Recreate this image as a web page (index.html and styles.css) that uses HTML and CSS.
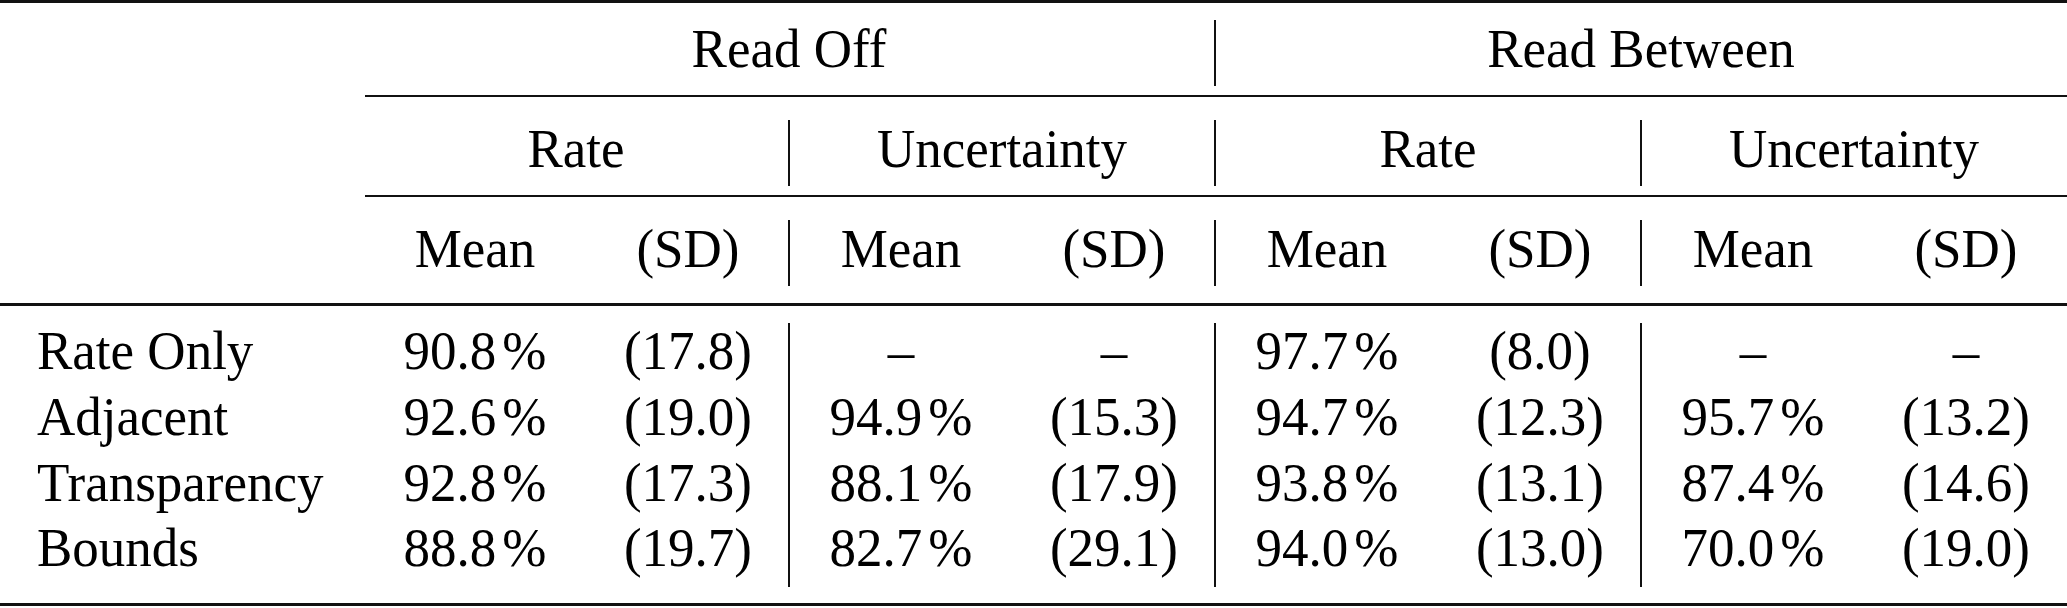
FILE: index.html
```html
<!DOCTYPE html>
<html lang="en">
<head>
<meta charset="utf-8">
<title>Read Off / Read Between results</title>
<link rel="stylesheet" href="styles.css">
</head>
<body>
<div class="tbl">
  <div class="rule thick"></div>

  <div class="hrow h1">
    <div class="c ro">Read Off</div>
    <div class="c rb">Read Between</div>
    <span class="vl g3"></span>
  </div>

  <div class="cmid"></div>

  <div class="hrow h2">
    <div class="c g1">Rate</div>
    <div class="c g2">Uncertainty</div>
    <div class="c g3">Rate</div>
    <div class="c g4">Uncertainty</div>
    <span class="vl g2"></span>
    <span class="vl g3"></span>
    <span class="vl g4"></span>
  </div>

  <div class="cmid"></div>

  <div class="hrow h3 cells">
    <div class="c lab"></div>
    <div class="c">Mean</div>
    <div class="c">(SD)</div>
    <div class="c">Mean</div>
    <div class="c">(SD)</div>
    <div class="c">Mean</div>
    <div class="c">(SD)</div>
    <div class="c">Mean</div>
    <div class="c">(SD)</div>
    <span class="vl g2"></span>
    <span class="vl g3"></span>
    <span class="vl g4"></span>
  </div>

  <div class="rule thick"></div>

  <div class="body">
    <div class="drow r1 cells">
      <div class="c lab">Rate Only</div>
      <div class="c">90.8<span class="pct">%</span></div>
      <div class="c">(17.8)</div>
      <div class="c">–</div>
      <div class="c">–</div>
      <div class="c">97.7<span class="pct">%</span></div>
      <div class="c">(8.0)</div>
      <div class="c">–</div>
      <div class="c">–</div>
    </div>
    <div class="drow r2 cells">
      <div class="c lab">Adjacent</div>
      <div class="c">92.6<span class="pct">%</span></div>
      <div class="c">(19.0)</div>
      <div class="c">94.9<span class="pct">%</span></div>
      <div class="c">(15.3)</div>
      <div class="c">94.7<span class="pct">%</span></div>
      <div class="c">(12.3)</div>
      <div class="c">95.7<span class="pct">%</span></div>
      <div class="c">(13.2)</div>
    </div>
    <div class="drow r3 cells">
      <div class="c lab">Transparency</div>
      <div class="c">92.8<span class="pct">%</span></div>
      <div class="c">(17.3)</div>
      <div class="c">88.1<span class="pct">%</span></div>
      <div class="c">(17.9)</div>
      <div class="c">93.8<span class="pct">%</span></div>
      <div class="c">(13.1)</div>
      <div class="c">87.4<span class="pct">%</span></div>
      <div class="c">(14.6)</div>
    </div>
    <div class="drow r4 cells">
      <div class="c lab">Bounds</div>
      <div class="c">88.8<span class="pct">%</span></div>
      <div class="c">(19.7)</div>
      <div class="c">82.7<span class="pct">%</span></div>
      <div class="c">(29.1)</div>
      <div class="c">94.0<span class="pct">%</span></div>
      <div class="c">(13.0)</div>
      <div class="c">70.0<span class="pct">%</span></div>
      <div class="c">(19.0)</div>
    </div>
    <span class="vl g2"></span>
    <span class="vl g3"></span>
    <span class="vl g4"></span>
  </div>

  <div class="rule thick"></div>
</div>
</body>
</html>
```
FILE: styles.css
```css
html, body {
  margin: 0;
  padding: 0;
  background: #ffffff;
}

.tbl {
  width: 2067px;
  font-family: "Liberation Serif", "Times New Roman", serif;
  font-size: 53px;
  color: #000;
}

.rule.thick {
  height: 3px;
  background: #111;
}

.cmid {
  height: 2px;
  margin-left: 365px;
  background: #111;
}

.hrow,
.body {
  display: grid;
  grid-template-columns: 363px repeat(4, 224px 202px);
}

.c {
  grid-row: 1;
  text-align: center;
  white-space: nowrap;
  line-height: 60px;
  transform: scaleY(1.055);
}

.c.lab {
  text-align: left;
  padding-left: 37px;
}

.pct {
  margin-left: 6px;
}

/* header row 1 */
.h1 {
  grid-template-rows: 92px;
}
.h1 .c {
  padding-top: 16px;
  transform-origin: 50% 63.9px;
}
.h1 .ro { grid-column: 2 / span 4; }
.h1 .rb { grid-column: 6 / span 4; }

/* header row 2 */
.h2 {
  grid-template-rows: 98px;
}
.h2 .c {
  padding-top: 22px;
  transform-origin: 50% 69.9px;
}
.h2 .c.g1 { grid-column: 2 / span 2; }
.h2 .c.g2 { grid-column: 4 / span 2; }
.h2 .c.g3 { grid-column: 6 / span 2; }
.h2 .c.g4 { grid-column: 8 / span 2; }

/* header row 3 */
.h3 {
  grid-template-rows: 106px;
}
.h3 .c {
  padding-top: 22px;
  transform-origin: 50% 69.9px;
}

/* column placement shared by header row 3 and data rows */
.cells > .c:nth-child(1) { grid-column: 1; }
.cells > .c:nth-child(2) { grid-column: 2; }
.cells > .c:nth-child(3) { grid-column: 3; }
.cells > .c:nth-child(4) { grid-column: 4; }
.cells > .c:nth-child(5) { grid-column: 5; }
.cells > .c:nth-child(6) { grid-column: 6; }
.cells > .c:nth-child(7) { grid-column: 7; }
.cells > .c:nth-child(8) { grid-column: 8; }
.cells > .c:nth-child(9) { grid-column: 9; }

/* data body */
.body {
  grid-template-rows: 13.2px repeat(4, 65.75px) 20.8px;
}
.drow {
  display: contents;
}
.drow .c {
  line-height: 65.75px;
  transform-origin: 50% 50.76px;
}
.r1 > .c { grid-row: 2; }
.r2 > .c { grid-row: 3; }
.r3 > .c { grid-row: 4; }
.r4 > .c { grid-row: 5; }

/* vertical rules */
.vl {
  grid-row: 1 / -1;
  justify-self: start;
  width: 2px;
  margin-left: -1px;
  background: #111;
}
.vl.g2 { grid-column: 4; }
.vl.g3 { grid-column: 6; }
.vl.g4 { grid-column: 8; }

.h1 .vl { margin-top: 17px; margin-bottom: 9px; }
.h2 .vl { margin-top: 23px; margin-bottom: 9px; }
.h3 .vl { margin-top: 23px; margin-bottom: 17px; }
.body .vl { margin-top: 17.3px; margin-bottom: 16.3px; }
```
